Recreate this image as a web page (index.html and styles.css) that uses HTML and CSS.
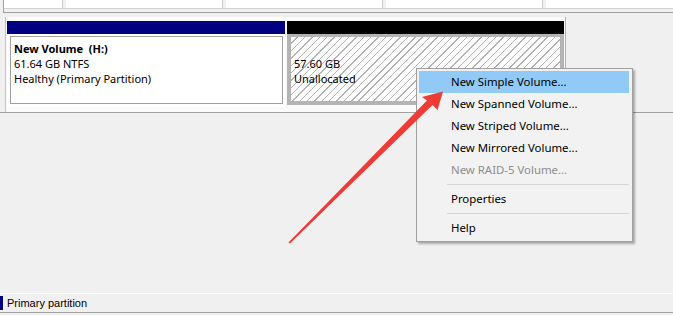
FILE: index.html
```html
<!DOCTYPE html>
<html lang="en">
<head>
  <meta charset="UTF-8">
  <title>Disk Management</title>
  <link rel="stylesheet" href="styles.css">
</head>
<body>
  <!-- Volume list (scrolled, only the bottom of the rows shows) -->
  <div class="volume-list">
    <div class="volume-row">
      <div class="cell cell-first"></div>
      <div class="cell cell-wide"></div>
      <div class="cell cell-wide"></div>
      <div class="cell cell-wide"></div>
      <div class="cell cell-last"></div>
    </div>
  </div>

  <!-- Disk map -->
  <div class="disk-map">
    <div class="disk">
      <div class="partition">
        <div class="bar bar-primary"></div>
        <div class="box box-primary">
          <div class="box-inner">
            <div class="name">New Volume&nbsp; (H:)</div>
            <div>61.64 GB NTFS</div>
            <div>Healthy (Primary Partition)</div>
          </div>
        </div>
      </div>
      <div class="partition">
        <div class="bar bar-free"></div>
        <div class="box box-free">
          <div class="name">&nbsp;</div>
          <div>57.60 GB</div>
          <div>Unallocated</div>
        </div>
      </div>
    </div>
  </div>

  <div class="spacer"></div>

  <!-- Legend / status bar -->
  <div class="legend">
    <span class="legend-swatch"></span>
    <span>Primary partition</span>
  </div>

  <!-- Context menu -->
  <ul class="menu">
    <li class="menu-item active">New Simple Volume...</li>
    <li class="menu-item">New Spanned Volume...</li>
    <li class="menu-item">New Striped Volume...</li>
    <li class="menu-item">New Mirrored Volume...</li>
    <li class="menu-item disabled">New RAID-5 Volume...</li>
    <li class="menu-sep"></li>
    <li class="menu-item">Properties</li>
    <li class="menu-sep"></li>
    <li class="menu-item">Help</li>
  </ul>

  <!-- Red annotation arrow -->
  <svg class="arrow" width="673" height="315" viewBox="0 0 673 315">
    <polygon fill="#ef3b36" points="288.5,242.5 427,100.5 422,97 443,91.5 437.5,110 432.5,105 290,243.5"/>
  </svg>
</body>
</html>
```

FILE: styles.css
```css
body {
  margin: 0;
  width: 673px;
  height: 315px;
  background-color: #f0f0f0;
  font-family: "Noto Sans", "Segoe UI", sans-serif;
  font-size: 11px;
  color: #000;
  display: flex;
  flex-direction: column;
  overflow: hidden;
  position: relative;
}

/* top list */
.volume-list {
  height: 12px;
  margin-left: 3px;
  border-left: 1px solid #a0a0a0;
  border-bottom: 1px solid #a0a0a0;
}

.volume-row {
  display: flex;
  gap: 3px;
  height: 8px;
  border-bottom: 1px solid #d0d0d0;
}

.cell {
  background-color: #fff;
  border-right: 1px solid #c8c8c8;
}

.cell-first {
  width: 58px;
}

.cell-wide {
  width: 156px;
}

.cell-last {
  flex: 1;
  border-right: none;
}

/* disk map */
.disk-map {
  margin-top: 4px;
  height: 95px;
  border-bottom: 1px solid #a0a0a0;
}

.disk {
  margin-left: 5px;
  width: 561px;
  height: 95px;
  box-sizing: border-box;
  padding: 4px 0 0 1px;
  background-color: #fafafa;
  border-left: 1px solid #c4c4c4;
  border-right: 1px solid #b0b0b0;
  display: grid;
  grid-template-columns: 278px 277px;
  column-gap: 2px;
  align-items: start;
}

.bar {
  height: 13px;
}

.bar-primary {
  background-color: #000080;
}

.bar-free {
  background-color: #000;
}

.box {
  box-sizing: border-box;
  line-height: 15px;
}

.box-primary {
  height: 73px;
  padding: 2px 2px 3px 3px;
  background-color: #fff;
}

.box-inner {
  height: 100%;
  box-sizing: border-box;
  border: 1px solid #a0a0a0;
  padding: 4px 3px;
}

.name {
  font-weight: bold;
}

.box-free {
  height: 71px;
  padding: 4px 3px;
  border: 4px solid #b4b4b4;
  border-top-width: 3px;
  background: repeating-linear-gradient(135deg, #fff 0 4.2px, #b4b4b4 4.2px 5.2px);
}

.spacer {
  flex: 1;
}

/* legend */
.legend {
  height: 18px;
  border-top: 1px solid #fff;
  border-bottom: 1px solid #a0a0a0;
  margin-bottom: 2px;
  display: flex;
  align-items: center;
  gap: 4px;
  font-family: "Liberation Sans", Arial, sans-serif;
  font-size: 11px;
}

.legend-swatch {
  width: 3px;
  height: 14px;
  background-color: #000080;
}

/* context menu */
.menu {
  position: absolute;
  left: 416px;
  top: 68px;
  width: 210px;
  margin: 0;
  padding: 2px 3px 2px 2px;
  list-style: none;
  background-color: #f2f2f2;
  border: 1px solid #a0a0a0;
  box-shadow: 2px 2px 2px rgba(0, 0, 0, 0.3);
  font-size: 11.4px;
}

.menu-item {
  height: 22px;
  line-height: 22px;
  padding-left: 32px;
}

.menu-item.active {
  background-color: #91c9f7;
}

.menu-item.disabled {
  color: #8d8d8d;
}

.menu-sep {
  height: 1px;
  margin: 3px 0 3px 28px;
  background-color: #d7d7d7;
}

.arrow {
  position: absolute;
  left: 0;
  top: 0;
}
```
